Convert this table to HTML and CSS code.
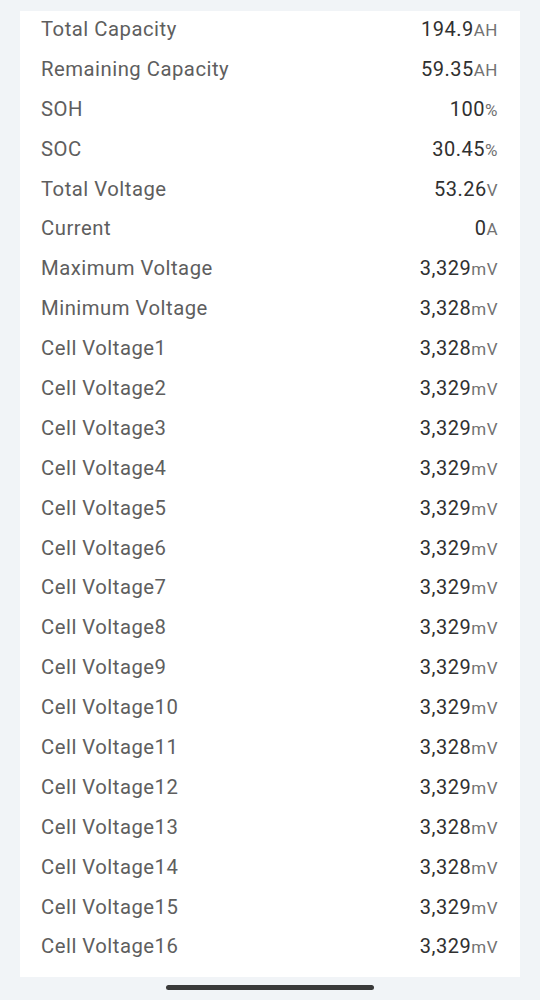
FILE: index.html
```html
<!DOCTYPE html>
<html lang="en">
<head>
<meta charset="utf-8">
<title>Battery</title>
<link rel="stylesheet" href="styles.css">
</head>
<body>
<div class="page">
  <div class="card">
    <div class="row"><span class="label">Total Capacity</span><span class="value">194.9<span class="unit">AH</span></span></div>
    <div class="row"><span class="label">Remaining Capacity</span><span class="value">59.35<span class="unit">AH</span></span></div>
    <div class="row"><span class="label">SOH</span><span class="value">100<span class="unit">%</span></span></div>
    <div class="row"><span class="label">SOC</span><span class="value">30.45<span class="unit">%</span></span></div>
    <div class="row"><span class="label">Total Voltage</span><span class="value">53.26<span class="unit">V</span></span></div>
    <div class="row"><span class="label">Current</span><span class="value">0<span class="unit">A</span></span></div>
    <div class="row"><span class="label">Maximum Voltage</span><span class="value">3,329<span class="unit">mV</span></span></div>
    <div class="row"><span class="label">Minimum Voltage</span><span class="value">3,328<span class="unit">mV</span></span></div>
    <div class="row"><span class="label">Cell Voltage1</span><span class="value">3,328<span class="unit">mV</span></span></div>
    <div class="row"><span class="label">Cell Voltage2</span><span class="value">3,329<span class="unit">mV</span></span></div>
    <div class="row"><span class="label">Cell Voltage3</span><span class="value">3,329<span class="unit">mV</span></span></div>
    <div class="row"><span class="label">Cell Voltage4</span><span class="value">3,329<span class="unit">mV</span></span></div>
    <div class="row"><span class="label">Cell Voltage5</span><span class="value">3,329<span class="unit">mV</span></span></div>
    <div class="row"><span class="label">Cell Voltage6</span><span class="value">3,329<span class="unit">mV</span></span></div>
    <div class="row"><span class="label">Cell Voltage7</span><span class="value">3,329<span class="unit">mV</span></span></div>
    <div class="row"><span class="label">Cell Voltage8</span><span class="value">3,329<span class="unit">mV</span></span></div>
    <div class="row"><span class="label">Cell Voltage9</span><span class="value">3,329<span class="unit">mV</span></span></div>
    <div class="row"><span class="label">Cell Voltage10</span><span class="value">3,329<span class="unit">mV</span></span></div>
    <div class="row"><span class="label">Cell Voltage11</span><span class="value">3,328<span class="unit">mV</span></span></div>
    <div class="row"><span class="label">Cell Voltage12</span><span class="value">3,329<span class="unit">mV</span></span></div>
    <div class="row"><span class="label">Cell Voltage13</span><span class="value">3,328<span class="unit">mV</span></span></div>
    <div class="row"><span class="label">Cell Voltage14</span><span class="value">3,328<span class="unit">mV</span></span></div>
    <div class="row"><span class="label">Cell Voltage15</span><span class="value">3,329<span class="unit">mV</span></span></div>
    <div class="row"><span class="label">Cell Voltage16</span><span class="value">3,329<span class="unit">mV</span></span></div>
  </div>
  <div class="home-bar"></div>
</div>
</body>
</html>
```
FILE: styles.css
```css
html, body {
  margin: 0;
  padding: 0;
  background: #f1f4f7;
}
body {
  width: 540px;
  height: 1000px;
  overflow: hidden;
  font-family: Roboto, "Noto Sans", sans-serif;
}
.page {
  display: flex;
  flex-direction: column;
  align-items: center;
  padding-top: 11px;
}
.card {
  width: 500px;
  box-sizing: border-box;
  background: #ffffff;
  padding: 0 22px 9px 21px;
  display: flex;
  flex-direction: column;
}
.row {
  height: 39.9px;
  display: flex;
  justify-content: space-between;
  align-items: flex-start;
  line-height: 36px;
}
.label {
  font-size: 20.3px;
  letter-spacing: 0.5px;
  color: #5e5e5e;
}
.value {
  font-size: 20px;
  letter-spacing: 0.5px;
  color: #303030;
}
.unit {
  font-size: 17px;
  color: #727272;
}
.home-bar {
  margin-top: 8px;
  width: 208px;
  height: 5px;
  border-radius: 3px;
  background: #3a3a3a;
}
```
